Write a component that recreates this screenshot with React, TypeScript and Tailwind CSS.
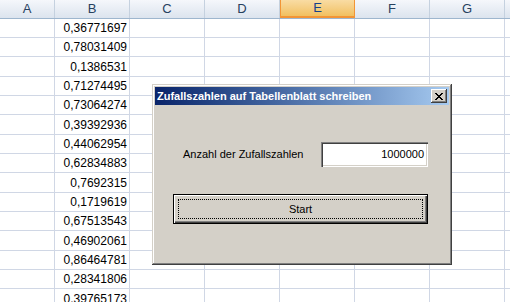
import React from 'react';

const columns = [
  { name: 'A', width: 'w-[55px]' },
  { name: 'B', width: 'w-[75px]' },
  { name: 'C', width: 'w-[75px]' },
  { name: 'D', width: 'w-[75px]' },
  { name: 'E', width: 'w-[75px]' },
  { name: 'F', width: 'w-[75px]' },
  { name: 'G', width: 'w-[75px]' },
  { name: '', width: 'w-[20px]' },
];

const values = [
  '0,36771697',
  '0,78031409',
  '0,1386531',
  '0,71274495',
  '0,73064274',
  '0,39392936',
  '0,44062954',
  '0,62834883',
  '0,7692315',
  '0,1719619',
  '0,67513543',
  '0,46902061',
  '0,86464781',
  '0,28341806',
  '0,39765173',
];

// rows in the shot alternate 19/19/20 px
const rowHeight = (i: number) => (i % 3 === 2 ? 'h-[20px]' : 'h-[19px]');

function Sheet() {
  return (
    <div className="flex flex-col">
      {/* column headers */}
      <div className="flex h-[19px] border-b border-[#9eb6ce]">
        {columns.map((col) => (
          <div
            key={col.name || 'h'}
            className={`${col.width} shrink-0 flex items-center justify-center border-r text-[13px] ${
              col.name === 'E'
                ? 'border-[#f29536] bg-gradient-to-b from-[#f9dca3] to-[#f1c05f] text-[#15428b] border-l border-b-2'
                : 'border-[#c5d1df] bg-gradient-to-b from-[#f5f7fb] to-[#dce4ee] text-[#27415f]'
            }`}
          >
            {col.name}
          </div>
        ))}
      </div>
      {values.map((v, i) => (
        <div key={i} className={`flex ${rowHeight(i)}`}>
          {columns.map((col) => (
            <div
              key={col.name || 'h'}
              className={`${col.width} shrink-0 flex items-center justify-end border-r border-b border-[#d0d7e5] bg-white pr-[2px] text-[12px] text-black`}
            >
              {col.name === 'B' ? v : ''}
            </div>
          ))}
        </div>
      ))}
    </div>
  );
}

function Dialog() {
  return (
    <div className="absolute left-[152px] top-[84px] w-[300px] h-[181px] bg-[#d4d0c8] p-[3px] shadow-[inset_-1px_-1px_#404040,inset_1px_1px_#d4d0c8,inset_-2px_-2px_#808080,inset_2px_2px_#ffffff]">
      {/* title bar */}
      <div className="flex h-[18px] items-center justify-between bg-gradient-to-r from-[#0a246a] to-[#a6caf0] pl-[2px] pr-[2px]">
        <span className="text-[11px] font-bold text-white leading-none">Zufallszahlen auf Tabellenblatt schreiben</span>
        <div className="flex h-[14px] w-[16px] items-center justify-center bg-[#d4d0c8] shadow-[inset_-1px_-1px_#404040,inset_1px_1px_#ffffff,inset_-2px_-2px_#808080]">
          <svg width="8" height="7" viewBox="0 0 8 7">
            <path d="M0 0h2v1h1v1h2V1h1V0h2v1H7v1H6v1H5v1h1v1h1v1h1v1H6V6H5V5H3v1H2v1H0V6h1V5h1V4h1V3H2V2H1V1H0z" fill="#000" />
          </svg>
        </div>
      </div>

      {/* body */}
      <div className="flex flex-col pl-[18px] pr-[21px] pt-[37px] text-[11px] text-black">
        <div className="flex items-center justify-between">
          <span className="pl-[10px]">Anzahl der Zufallszahlen</span>
          <div className="flex h-[25px] w-[107px] items-center justify-end bg-white pr-[4px] shadow-[inset_1px_1px_#808080,inset_2px_2px_#404040,inset_-1px_-1px_#ffffff,inset_-2px_-2px_#d4d0c8]">
            1000000
          </div>
        </div>
        <div className="relative mt-[27px] flex h-[30px] items-center justify-center border border-black bg-[#d4d0c8] shadow-[inset_1px_1px_#ffffff,inset_-1px_-1px_#404040,inset_-2px_-2px_#808080]">
          <div className="absolute inset-[4px] border border-dotted border-black" />
          Start
        </div>
      </div>
    </div>
  );
}

export default function App() {
  return (
    <div
      className="relative h-[302px] w-[510px] overflow-hidden bg-white"
      style={{ fontFamily: '"Liberation Sans", Arial, sans-serif' }}
    >
      <Sheet />
      <Dialog />
    </div>
  );
}
